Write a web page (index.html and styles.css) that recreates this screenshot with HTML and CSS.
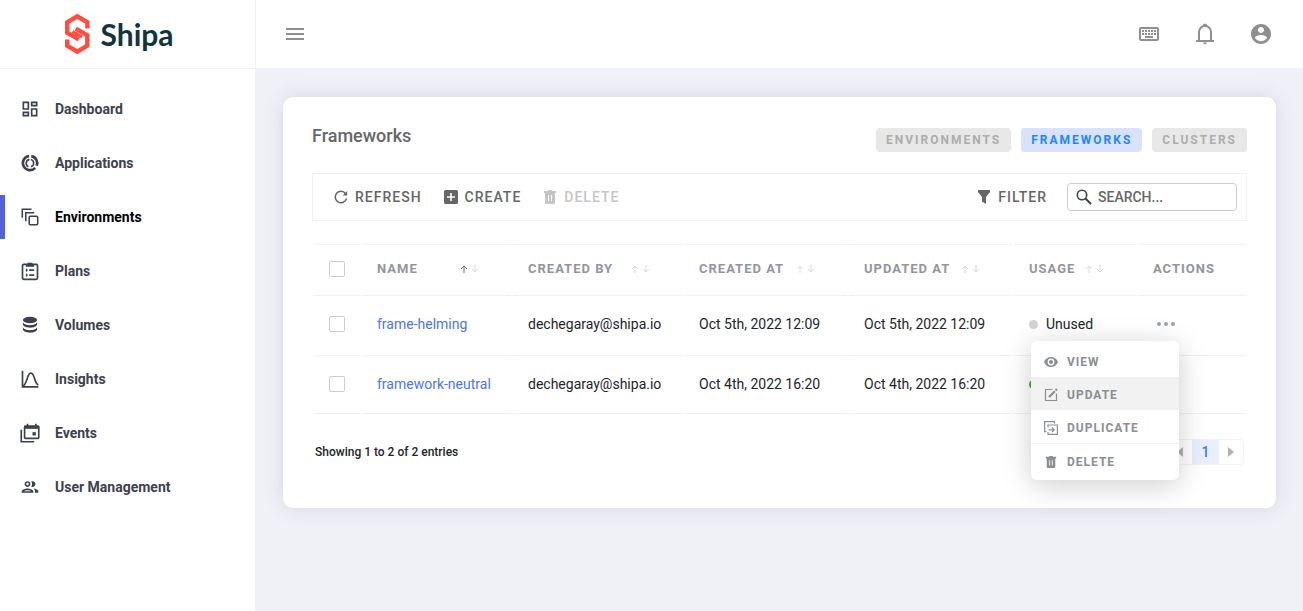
FILE: index.html
```
<!DOCTYPE html>
<html lang="en">
<head>
    <meta charset="UTF-8">
    <meta name="viewport" content="width=device-width, initial-scale=1.0">
    <title>Shipa - Frameworks</title>
    <link rel="stylesheet" href="styles.css">
</head>
<body>
    <!-- shared icons -->
    <svg class="sprite" aria-hidden="true">
        <symbol id="i-sort-up" viewBox="0 0 8 8">
            <path d="M4 8V1M1 4l3-3 3 3" fill="none" stroke="currentColor"/>
        </symbol>
        <symbol id="i-sort-down" viewBox="0 0 8 8">
            <path d="M4 0v7M1 4l3 3 3-3" fill="none" stroke="currentColor"/>
        </symbol>
        <symbol id="i-trash" viewBox="0 0 14 14">
            <path fill-rule="evenodd" d="M5 0h4v1h4v2H1V1h4zM2 3h10v9.500a1.500 1.500 0 0 1-1.500 1.500h-7A1.500 1.500 0 0 1 2 12.500zM5 5v6h1V5zM8 5v6h1V5z"/>
        </symbol>
    </svg>

    <aside class="sidebar">
        <a href="#" class="logo">
            <svg width="26" height="42" viewBox="0 0 26 42" fill="none" stroke="#ff4b40" stroke-width="4.400">
                <path d="M22.300 15.500V9.300L12.300 3.400 2.200 9.300v10.400L13.800 26.400"/>
                <path d="M2.200 26.500v6.200l10.100 5.900 10-5.900V22.300L10.700 15.600"/>
                <path d="M7.500 18.600L17 24" stroke-width="3"/>
            </svg>
            <span>Shipa</span>
        </a>
        <nav class="menu">
            <a href="#" class="menu-item">
                <svg viewBox="0 0 24 24"><path d="M19 5v2h-4V5h4M9 5v6H5V5h4m10 8v6h-4v-6h4M9 17v2H5v-2h4M21 3h-8v6h8V3zM11 3H3v10h8V3zm10 8h-8v10h8V11zm-10 4H3v6h8v-6z"/></svg>
                <span>Dashboard</span>
            </a>
            <a href="#" class="menu-item">
                <svg viewBox="0 0 24 24" fill="none" stroke="currentColor">
                    <path d="M11 3.600a8.500 8.500 0 1 0 7.200 14.200M20 15.300a8.500 8.500 0 0 0-6.500-11.600" stroke-width="3.200"/>
                    <path d="M11 7.800a4.600 4.600 0 0 0-1 8.600M13 7.800a4.600 4.600 0 0 1 1.500 8.200" stroke-width="2"/>
                    <path d="M9 9.500l2-2.500M15.200 14.500l-2 2.500" stroke-width="1.500"/>
                </svg>
                <span>Applications</span>
            </a>
            <a href="#" class="menu-item active">
                <svg viewBox="0 0 26 26" fill="none" stroke="currentColor" stroke-width="2">
                    <rect x="12" y="12" width="11" height="11" rx="1.500"/>
                    <path d="M7.500 18.500v-11h11M3 14V3h12"/>
                </svg>
                <span>Environments</span>
            </a>
            <a href="#" class="menu-item">
                <svg viewBox="0 0 24 24" fill="none" stroke="currentColor" stroke-width="2">
                    <rect x="3" y="4" width="18" height="18" rx="1.500"/>
                    <path d="M7 5.500h10M12 5V2M9 3.500h6" stroke-width="2.600"/>
                    <path d="M7 11h2M7 17h2M11 11h6M11 17h6" stroke-width="2"/>
                    <path d="M8 9v4M8 15v4" stroke-width="1"/>
                </svg>
                <span>Plans</span>
            </a>
            <a href="#" class="menu-item">
                <svg viewBox="0 0 24 24">
                    <ellipse cx="12" cy="6" rx="8.500" ry="4"/>
                    <path d="M3.500 8.500c1 5 16 5 17 0v3c-1 5-16 5-17 0zM3.500 14.500c1 5 16 5 17 0v3c-1 5-16 5-17 0z"/>
                </svg>
                <span>Volumes</span>
            </a>
            <a href="#" class="menu-item">
                <svg viewBox="0 0 24 24" fill="none" stroke="currentColor" stroke-width="2">
                    <path d="M3 2v19.500h19"/>
                    <path d="M3 20.500c6-1 5-15.500 10-15.500s4 12.500 9 14"/>
                </svg>
                <span>Insights</span>
            </a>
            <a href="#" class="menu-item">
                <svg viewBox="0 0 24 24" fill="none" stroke="currentColor" stroke-width="2">
                    <rect x="5.500" y="4" width="17" height="14.500" rx="1"/>
                    <path d="M5 5h18" stroke-width="4"/>
                    <path d="M9 1v3M19 1v3M1.500 8v14.500H17"/>
                    <path d="M15 11h4v4h-4z" fill="currentColor" stroke="none"/>
                </svg>
                <span>Events</span>
            </a>
            <a href="#" class="menu-item">
                <svg viewBox="0 0 24 24"><path d="M9 13.750c-2.340 0-7 1.170-7 3.500V19h14v-1.750c0-2.330-4.660-3.500-7-3.500zM4.340 17c.84-.58 2.870-1.250 4.660-1.250s3.820.67 4.660 1.250H4.340zM9 12c1.930 0 3.500-1.570 3.500-3.500S10.930 5 9 5 5.500 6.570 5.500 8.500 7.070 12 9 12zm0-5c.83 0 1.500.67 1.500 1.500S9.830 10 9 10s-1.500-.67-1.500-1.500S8.170 7 9 7zm7.040 6.810c1.160.84 1.960 1.960 1.960 3.440V19h4v-1.750c0-2.020-3.500-3.170-5.960-3.440zM15 12c1.930 0 3.500-1.570 3.500-3.500S16.930 5 15 5c-.54 0-1.040.13-1.500.35.63.89 1 1.980 1 3.150s-.37 2.260-1 3.150c.46.22.96.35 1.500.35z"/></svg>
                <span>User Management</span>
            </a>
        </nav>
    </aside>

    <div class="page">
        <header class="topbar">
            <button type="button" class="icon-btn" aria-label="Toggle menu">
                <svg viewBox="0 0 24 24"><path d="M3 6h18v2H3zM3 11h18v2H3zM3 16h18v2H3z"/></svg>
            </button>
            <div class="topbar-right">
                <button type="button" class="icon-btn" aria-label="Keyboard shortcuts">
                    <svg viewBox="0 0 24 24">
                        <path fill-rule="evenodd" d="M4 5h16a2 2 0 0 1 2 2v10a2 2 0 0 1-2 2H4a2 2 0 0 1-2-2V7a2 2 0 0 1 2-2zM4 7v10h16V7z"/>
                        <path d="M5 8h2v2H5zM8 8h2v2H8zM11 8h2v2h-2zM14 8h2v2h-2zM17 8h2v2h-2zM5 11h2v2H5zM8 11h2v2H8zM11 11h2v2h-2zM14 11h2v2h-2zM17 11h2v2h-2zM8 14h8v2H8z"/>
                    </svg>
                </button>
                <button type="button" class="icon-btn" aria-label="Notifications">
                    <svg viewBox="0 0 24 24" fill="none" stroke="currentColor" stroke-width="2">
                        <path d="M3 19h18M6 19v-9a6 6 0 0 1 12 0v9"/>
                        <path d="M10 4a2 2 0 0 1 4 0zM10.500 21h3l-1.500 1z" fill="currentColor" stroke-width="1"/>
                    </svg>
                </button>
                <button type="button" class="icon-btn" aria-label="Account">
                    <svg viewBox="0 0 24 24"><path d="M12 2C6.480 2 2 6.480 2 12s4.480 10 10 10 10-4.480 10-10S17.520 2 12 2zm0 3c1.660 0 3 1.340 3 3s-1.340 3-3 3-3-1.340-3-3 1.340-3 3-3zm0 14.200c-2.500 0-4.710-1.280-6-3.220.03-1.990 4-3.080 6-3.080 1.990 0 5.970 1.090 6 3.080-1.290 1.940-3.500 3.220-6 3.220z"/></svg>
                </button>
            </div>
        </header>

        <main class="content">
            <section class="card">
                <div class="card-header">
                    <h1>Frameworks</h1>
                    <div class="tabs">
                        <a href="#" class="tab">ENVIRONMENTS</a>
                        <a href="#" class="tab active">FRAMEWORKS</a>
                        <a href="#" class="tab">CLUSTERS</a>
                    </div>
                </div>

                <div class="toolbar">
                    <div class="toolbar-group">
                        <button type="button" class="tool-btn">
                            <svg viewBox="0 0 14 14" fill="none" stroke="currentColor" stroke-width="1.500">
                                <path d="M12.500 8.500A5.700 5.700 0 1 1 11.500 3.500"/>
                                <path d="M13.200 1v4.500H8.700z" fill="currentColor" stroke="none"/>
                            </svg>
                            REFRESH
                        </button>
                        <button type="button" class="tool-btn">
                            <svg viewBox="0 0 14 14"><path fill-rule="evenodd" d="M1.500 0h11A1.500 1.500 0 0 1 14 1.500v11a1.500 1.500 0 0 1-1.500 1.500h-11A1.500 1.500 0 0 1 0 12.500v-11A1.500 1.500 0 0 1 1.500 0zM6.200 3v3.200H3v1.600h3.200V11h1.600V7.800H11V6.200H7.800V3z"/></svg>
                            CREATE
                        </button>
                        <button type="button" class="tool-btn" disabled>
                            <svg><use href="#i-trash"/></svg>
                            DELETE
                        </button>
                    </div>
                    <div class="toolbar-group filters">
                        <button type="button" class="tool-btn">
                            <svg viewBox="0 0 14 14"><path d="M1 0h12v2L9 7v7l-4-2.500V7L1 2z"/></svg>
                            FILTER
                        </button>
                        <label class="search">
                            <svg viewBox="0 0 16 16" fill="none" stroke="#3b424d">
                                <circle cx="6" cy="6" r="4.700" stroke-width="1.600"/>
                                <path d="M9.500 9.500l5.500 5.500" stroke-width="2"/>
                            </svg>
                            <input type="text" placeholder="SEARCH..." aria-label="Search">
                        </label>
                    </div>
                </div>

                <table class="data">
                    <colgroup>
                        <col class="col-check">
                        <col class="col-name">
                        <col class="col-by">
                        <col class="col-date">
                        <col class="col-date">
                        <col class="col-usage">
                        <col class="col-actions">
                    </colgroup>
                    <thead>
                        <tr>
                            <th><input type="checkbox" aria-label="Select all"></th>
                            <th class="sortable"><div>NAME <span class="sort asc"><svg><use href="#i-sort-up"/></svg><svg><use href="#i-sort-down"/></svg></span></div></th>
                            <th class="sortable"><div>CREATED BY <span class="sort"><svg><use href="#i-sort-up"/></svg><svg><use href="#i-sort-down"/></svg></span></div></th>
                            <th class="sortable"><div>CREATED AT <span class="sort"><svg><use href="#i-sort-up"/></svg><svg><use href="#i-sort-down"/></svg></span></div></th>
                            <th class="sortable"><div>UPDATED AT <span class="sort"><svg><use href="#i-sort-up"/></svg><svg><use href="#i-sort-down"/></svg></span></div></th>
                            <th class="sortable"><div>USAGE <span class="sort"><svg><use href="#i-sort-up"/></svg><svg><use href="#i-sort-down"/></svg></span></div></th>
                            <th>ACTIONS</th>
                        </tr>
                    </thead>
                    <tbody>
                        <tr>
                            <td><input type="checkbox" aria-label="Select frame-helming"></td>
                            <td><a href="#">frame-helming</a></td>
                            <td>dechegaray@shipa.io</td>
                            <td>Oct 5th, 2022 12:09</td>
                            <td>Oct 5th, 2022 12:09</td>
                            <td><span class="status">Unused</span></td>
                            <td>
                                <div class="actions">
                                    <button type="button" class="more-btn" aria-label="Actions">
                                        <svg width="18" height="4" viewBox="0 0 18 4"><circle cx="2" cy="2" r="2"/><circle cx="9" cy="2" r="2"/><circle cx="16" cy="2" r="2"/></svg>
                                    </button>
                                    <div class="dropdown">
                                        <button type="button">
                                            <svg viewBox="0 0 14 14"><path fill-rule="evenodd" d="M7 2C3.800 2 1 4 0 7c1 3 3.800 5 7 5s6-2 7-5c-1-3-3.800-5-7-5zm0 1.600a3.400 3.400 0 1 1 0 6.800 3.400 3.400 0 0 1 0-6.800zM7 5a2 2 0 1 0 0 4 2 2 0 0 0 0-4z"/></svg>
                                            VIEW
                                        </button>
                                        <button type="button" class="hover">
                                            <svg viewBox="0 0 14 14" fill="none" stroke="currentColor">
                                                <path d="M8.500 1.500H1.500v11h11V5.500" stroke-width="1.200"/>
                                                <path d="M5 9l5.800-5.800" stroke-width="2.200"/>
                                                <path d="M11.500 2.500l1.500-1.500" stroke-width="2.200"/>
                                            </svg>
                                            UPDATE
                                        </button>
                                        <button type="button" class="divided">
                                            <svg viewBox="0 0 14 14" fill="none" stroke="currentColor" stroke-width="1.200">
                                                <path d="M10.500 2.500V.6H.6v10h1.900M4 6.500V4h9.400v9.400H4V11"/>
                                                <path d="M4.500 8.800h5.500M8 6.500l2.300 2.300L8 11"/>
                                            </svg>
                                            DUPLICATE
                                        </button>
                                        <button type="button">
                                            <svg class="trash"><use href="#i-trash"/></svg>
                                            DELETE
                                        </button>
                                    </div>
                                </div>
                            </td>
                        </tr>
                        <tr>
                            <td><input type="checkbox" aria-label="Select framework-neutral"></td>
                            <td><a href="#">framework-neutral</a></td>
                            <td>dechegaray@shipa.io</td>
                            <td>Oct 4th, 2022 16:20</td>
                            <td>Oct 4th, 2022 16:20</td>
                            <td><span class="status used"></span></td>
                            <td></td>
                        </tr>
                    </tbody>
                </table>

                <div class="card-footer">
                    <span>Showing 1 to 2 of 2 entries</span>
                    <div class="pagination">
                        <button type="button" aria-label="Previous page"><svg width="6" height="10" viewBox="0 0 6 10"><path d="M6 0v10L0 5z"/></svg></button>
                        <button type="button" class="current">1</button>
                        <button type="button" aria-label="Next page"><svg width="6" height="10" viewBox="0 0 6 10"><path d="M0 0v10l6-5z"/></svg></button>
                    </div>
                </div>
            </section>
        </main>
    </div>
</body>
</html>
```
FILE: styles.css
```
* {
    box-sizing: border-box;
}

body {
    margin: 0;
    min-height: 100vh;
    display: flex;
    font-family: Roboto, sans-serif;
    font-size: 14px;
    color: #212529;
    background: #f0f1f7;
}

a {
    text-decoration: none;
}

button {
    font-family: inherit;
    background: none;
    border: none;
    padding: 0;
    cursor: pointer;
}

svg {
    display: block;
    flex: none;
    fill: currentColor;
}

svg[fill="none"] {
    fill: none;
}

.sprite {
    display: none;
}

/* Sidebar */
.sidebar {
    width: 256px;
    flex: none;
    background: #fff;
    border-right: 1px solid #f0f1f7;
}

.logo {
    display: flex;
    align-items: center;
    justify-content: center;
    gap: 9px;
    height: 69px;
    padding-right: 16px;
    border-bottom: 1px solid #f0f1f7;
    font-family: Lato, sans-serif;
    font-size: 30px;
    font-weight: 700;
    color: #12343f;
}

.menu {
    display: flex;
    flex-direction: column;
    gap: 10px;
    padding-top: 18px;
}

.menu-item {
    display: flex;
    align-items: center;
    gap: 15px;
    height: 44px;
    padding-left: 15px;
    border-left: 5px solid transparent;
    color: #3b424d;
    font-weight: 700;
}

.menu-item svg {
    width: 20px;
    height: 20px;
}

.menu-item.active {
    border-left-color: #5561dc;
}

.menu-item.active span {
    color: #000;
}

/* Top bar */
.page {
    flex: 1;
    min-width: 0;
}

.topbar {
    display: flex;
    align-items: center;
    justify-content: space-between;
    height: 68px;
    padding: 0 30px 0 27px;
    background: #fff;
}

.topbar-right {
    display: flex;
    gap: 32px;
}

.icon-btn {
    color: #8f8f8f;
}

.icon-btn svg {
    width: 24px;
    height: 24px;
}

/* Card */
.content {
    padding: 29px 27px;
}

.card {
    background: #fff;
    border-radius: 10px;
    padding: 27px 29px 43px;
    box-shadow: 0 0 20px rgba(60, 60, 110, 0.15);
}

.card-header {
    display: flex;
    justify-content: space-between;
    align-items: flex-start;
    margin-bottom: 21px;
}

.card-header h1 {
    margin: 0;
    font-size: 18px;
    line-height: 24px;
    font-weight: 500;
    color: #666;
}

.tabs {
    display: flex;
    gap: 10px;
    padding-top: 4px;
}

.tab {
    padding: 0 10px;
    border-radius: 4px;
    background: #e8e8e8;
    color: #adadad;
    font-size: 12px;
    line-height: 24px;
    font-weight: 700;
    letter-spacing: 2px;
}

.tab.active {
    background: #d9e2fb;
    color: #1e88ff;
}

/* Toolbar */
.toolbar {
    display: flex;
    justify-content: space-between;
    align-items: center;
    height: 48px;
    padding: 0 9px 0 21px;
    margin-bottom: 23px;
    border: 1px solid #f0f1f7;
}

.toolbar-group {
    display: flex;
    align-items: center;
    gap: 22px;
}

.toolbar-group.filters {
    gap: 20px;
}

.tool-btn {
    display: flex;
    align-items: center;
    gap: 7px;
    color: #666;
    font-size: 14px;
    font-weight: 500;
    letter-spacing: 1px;
}

.tool-btn svg {
    width: 14px;
    height: 14px;
}

.tool-btn:disabled {
    color: #c5c5c5;
    cursor: default;
}

.search {
    display: flex;
    align-items: center;
    gap: 6px;
    width: 170px;
    height: 28px;
    padding: 0 8px;
    border: 1px solid #ccc;
    border-radius: 4px;
}

.search svg {
    width: 16px;
    height: 16px;
}

.search input {
    width: 100%;
    min-width: 0;
    padding: 0;
    border: none;
    outline: none;
    font: 500 14px Roboto, sans-serif;
}

.search input::placeholder {
    color: #666;
    opacity: 1;
}

/* Table */
.data {
    width: 100%;
    table-layout: fixed;
    border-collapse: separate;
    border-spacing: 2px 0;
}

.col-check { width: 46px; }
.col-name { width: 149px; }
.col-by { width: 169px; }
.col-date { width: 163px; }
.col-usage { width: 122px; }
.col-actions { width: 107px; }

.data th,
.data td {
    height: 60px;
    padding: 0 15px 3px;
    text-align: left;
    white-space: nowrap;
    border-bottom: 1px solid #f0f1f7;
}

.data th {
    height: 52px;
    border-top: 1px solid #f0f1f7;
    font-size: 13px;
    font-weight: 700;
    letter-spacing: 1px;
    color: #92969c;
}

.data tr:last-child td {
    height: 58px;
    padding-bottom: 1px;
}

.data thead tr:last-child th {
    height: 52px;
}

.data .sortable {
    padding-right: 32px;
}

.sortable div {
    display: flex;
    align-items: center;
    justify-content: space-between;
}

.sort {
    display: flex;
    gap: 3px;
    color: #d9dadc;
}

.sort svg {
    width: 8px;
    height: 8px;
}

.sort.asc svg:first-child {
    color: #6b7078;
}

.data a {
    color: #4c75ef;
}

.data input[type="checkbox"] {
    appearance: none;
    display: block;
    width: 16px;
    height: 16px;
    margin: 0;
    border: 1px solid #ccc;
    border-radius: 2px;
    background: #fff;
}

.status {
    display: flex;
    align-items: center;
    gap: 8px;
}

.status::before {
    content: "";
    width: 9px;
    height: 9px;
    border-radius: 50%;
    background: #d3d3d3;
}

.status.used::before {
    background: #3fae2a;
}

/* Row actions */
.actions {
    position: relative;
    width: 26px;
}

.more-btn {
    display: flex;
    align-items: center;
    justify-content: center;
    width: 26px;
    height: 24px;
    color: #9ba3b1;
}

.dropdown {
    position: absolute;
    top: 29px;
    right: 0;
    z-index: 10;
    width: 148px;
    padding: 3px 0;
    border-radius: 6px;
    background: #fff;
    box-shadow: 0 5px 30px rgba(0, 0, 0, 0.2);
}

.dropdown button {
    display: flex;
    align-items: center;
    gap: 9px;
    width: 100%;
    height: 33px;
    padding: 2px 13px 0;
    color: #8b8e93;
    font-size: 12px;
    font-weight: 700;
    letter-spacing: 1px;
}

.dropdown button.hover {
    background: #f2f2f2;
}

.dropdown button.divided {
    height: 34px;
    border-bottom: 1px solid #f0f1f4;
}

.dropdown svg {
    width: 14px;
    height: 14px;
}

.dropdown .trash {
    height: 12px;
}

/* Footer */
.card-footer {
    display: flex;
    justify-content: space-between;
    align-items: center;
    margin-top: 25px;
    padding: 0 3px;
    font-size: 12px;
    font-weight: 500;
}

.pagination {
    display: flex;
    border: 1px solid #f2f3f5;
    border-radius: 4px;
}

.pagination button {
    display: flex;
    align-items: center;
    justify-content: center;
    width: 24px;
    height: 24px;
    color: #aeb1b5;
    font-size: 14px;
    font-weight: 500;
}

.pagination .current {
    width: 27px;
    background: #e9effc;
    color: #4c75ef;
}
```
